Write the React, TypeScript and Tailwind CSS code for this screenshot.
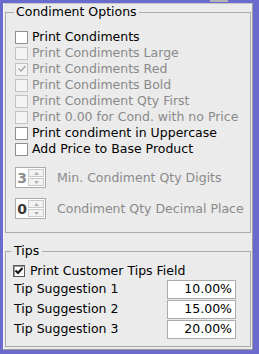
import React from "react";

function Box({ checked = false, disabled = false, classic = false }: { checked?: boolean; disabled?: boolean; classic?: boolean }) {
  const cls = classic
    ? "w-[12px] h-[12px] border border-[#5a5a5a] bg-white shadow-[inset_1px_1px_0_#9a9a9a]"
    : disabled
    ? "w-[13px] h-[13px] border border-[#c2c2c2] bg-[#f4f4f4]"
    : "w-[13px] h-[13px] border border-[#8e8e8e] bg-white";
  return (
    <div className={`shrink-0 flex items-center justify-center ${cls}`}>
      {checked && (
        <svg width="10" height="10" viewBox="0 0 10 10">
          <path
            d="M1.5 4.5 L4 7 L8.5 2"
            fill="none"
            stroke={disabled ? "#a8a8a8" : "#111"}
            strokeWidth={classic ? 2 : 1.5}
          />
        </svg>
      )}
    </div>
  );
}

function Row({ label, disabled = false, checked = false }: { label: string; disabled?: boolean; checked?: boolean }) {
  return (
    <div className="flex items-center h-4 gap-[4px]">
      <Box checked={checked} disabled={disabled} />
      <span className={`leading-4 whitespace-nowrap ${disabled ? "text-[#8a8a8a]" : "text-black"}`}>{label}</span>
    </div>
  );
}

function Spin({ value, dim, label }: { value: string; dim?: boolean; label: string }) {
  return (
    <div className="flex items-center h-[21px]">
      <div className="flex shrink-0 w-[31px] h-[21px] border border-[#ababab] bg-white">
        <div className={`w-[13px] flex items-center justify-center text-[14px] font-bold leading-none ${dim ? "text-[#8c8c8c]" : "text-[#3a3a3a]"}`}>
          {value}
        </div>
        <div className="flex flex-col gap-[1px] py-[1px] pr-[1px]">
          <div className="w-[16px] h-[9px] border border-[#c9c9c9] bg-[#f3f3f3] flex items-center justify-center">
            <svg width="5" height="3" viewBox="0 0 5 3"><path d="M0 3 L2.5 0 L5 3 Z" fill="#b0b0b0" /></svg>
          </div>
          <div className="w-[16px] h-[9px] border border-[#c9c9c9] bg-[#f3f3f3] flex items-center justify-center">
            <svg width="5" height="3" viewBox="0 0 5 3"><path d="M0 0 L2.5 3 L5 0 Z" fill="#b0b0b0" /></svg>
          </div>
        </div>
      </div>
      <span className="ml-[11px] text-[#8a8a8a] leading-4 whitespace-nowrap">{label}</span>
    </div>
  );
}

function TipRow({ label, value }: { label: string; value: string }) {
  return (
    <div className="flex items-center h-[20px] pl-[8px] pr-[14px]">
      <span className="flex-1 leading-4 text-black whitespace-nowrap">{label}</span>
      <div className="shrink-0 w-[69px] min-w-[69px] h-[19px] border border-[#ababab] bg-white flex items-center justify-end pr-[3px] text-black leading-4">
        {value}
      </div>
    </div>
  );
}

export default function App() {
  return (
    <div className="relative w-[259px] h-[354px] bg-[#6b6bcc] pt-[3px] pl-[3px] pr-[6px] pb-[4px] font-['DejaVu_Sans',Verdana,sans-serif] text-[12.5px]">
      <div className="absolute left-[210px] top-0 w-[18px] h-[2px] bg-[#b4b4b4]" />
      <div className="w-full h-full bg-[#ebebeb] border-t border-l border-t-[#c8c8c8] border-l-[#f5f5f5] border-r border-b border-r-[#9c9c9c] border-b-[#9c9c9c] pl-[1px] pr-[1px] pb-[3px] flex flex-col">
        <fieldset className="w-full border border-[#a9a9a9] p-0">
          <legend className="ml-[8px] px-[2px] h-4 leading-4 text-black">Condiment Options</legend>
          <div className="pl-[9px] pt-[9px] pb-[13px]">
            <div className="flex flex-col">
              <Row label="Print Condiments" />
              <Row label="Print Condiments Large" disabled />
              <Row label="Print Condiments Red" disabled checked />
              <Row label="Print Condiments Bold" disabled />
              <Row label="Print Condiment Qty First" disabled />
              <Row label="Print 0.00 for Cond. with no Price" disabled />
              <Row label="Print condiment in Uppercase" />
              <Row label="Add Price to Base Product" />
            </div>
            <div className="mt-[10px] flex flex-col gap-[10px]">
              <Spin value="3" dim label="Min. Condiment Qty Digits" />
              <Spin value="0" label="Condiment Qty Decimal Place" />
            </div>
          </div>
        </fieldset>
        <fieldset className="w-full mt-[10px] border border-[#a9a9a9] p-0">
          <legend className="ml-[5px] px-[3px] h-4 leading-4 text-black">Tips</legend>
          <div className="pt-[4px] pb-[7px]">
            <div className="flex items-center h-4 gap-[5px] pl-[7px]">
              <Box checked classic />
              <span className="leading-4 text-black whitespace-nowrap">Print Customer Tips Field</span>
            </div>
            <div className="flex flex-col">
              <TipRow label="Tip Suggestion 1" value="10.00%" />
              <TipRow label="Tip Suggestion 2" value="15.00%" />
              <TipRow label="Tip Suggestion 3" value="20.00%" />
            </div>
          </div>
        </fieldset>
      </div>
    </div>
  );
}
